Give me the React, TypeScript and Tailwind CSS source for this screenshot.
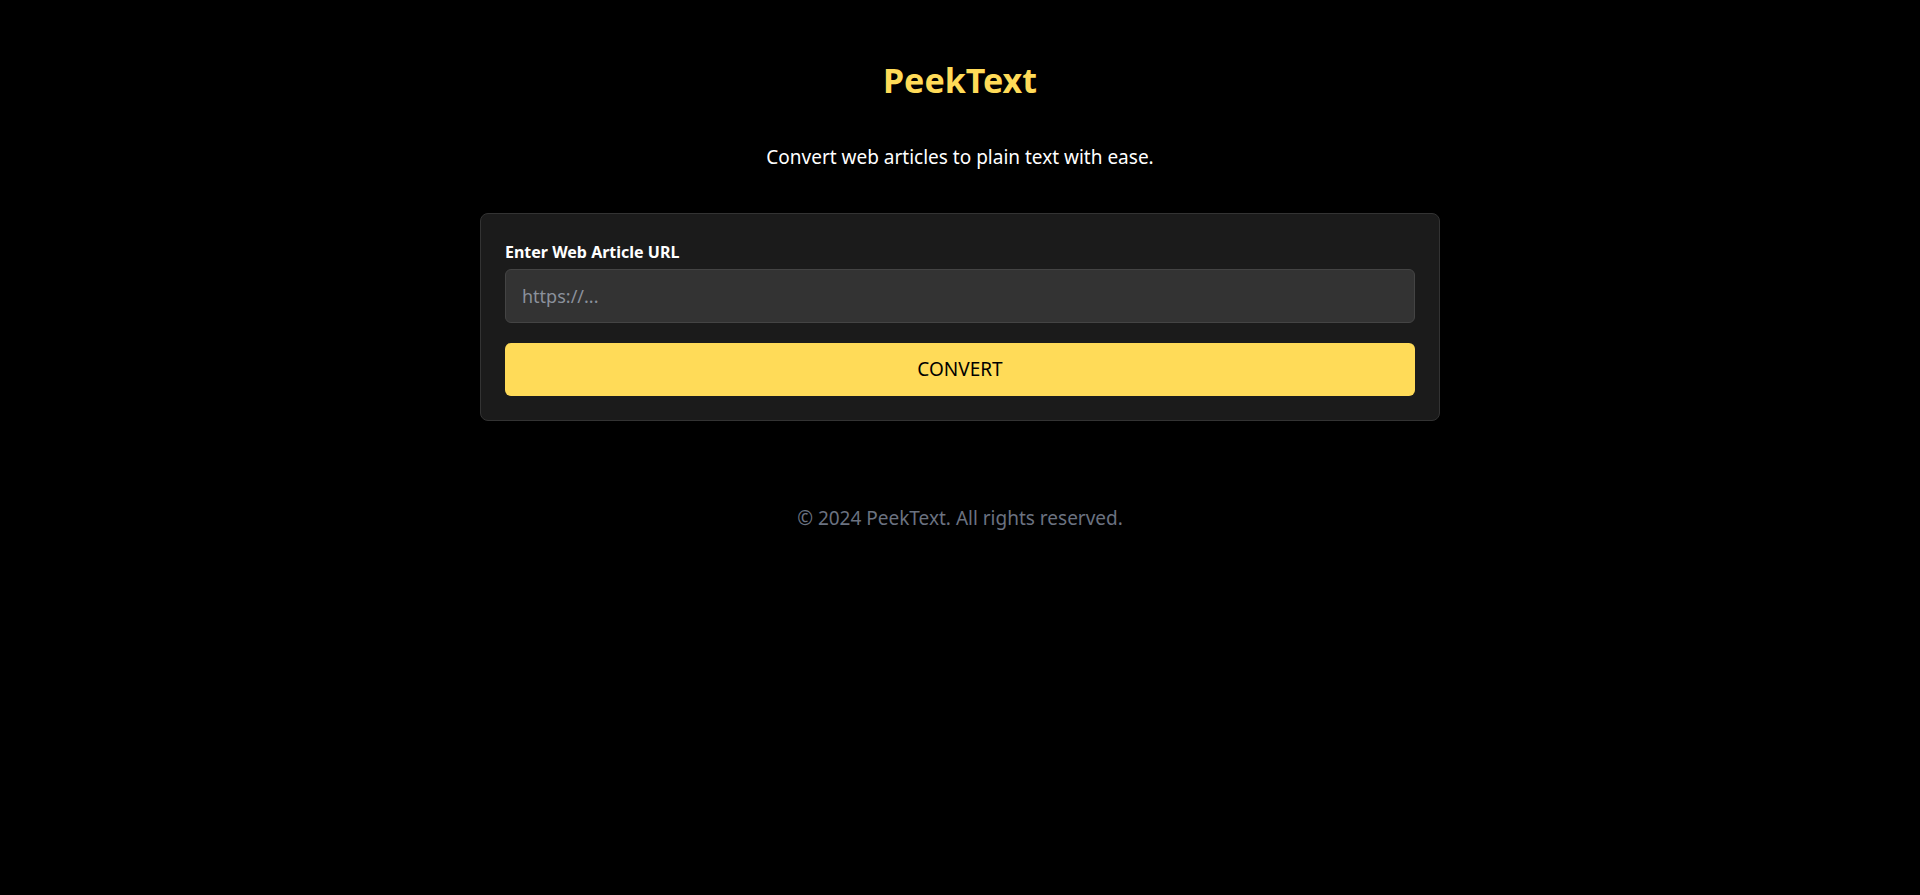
import { useState } from 'react';

export default function App() {
  const [url, setUrl] = useState('');

  return (
    <div className="min-h-screen bg-black flex flex-col items-center pt-[60px] font-['Noto_Sans',sans-serif]">
      {/* Header */}
      <h1 className="text-[34px] leading-10 font-bold text-[#ffdb58]">PeekText</h1>
      <p className="mt-[43px] text-[19px] leading-7 text-white">Convert web articles to plain text with ease.</p>

      {/* Converter card */}
      <div className="mt-[42px] w-[960px] bg-[#1b1b1b] border border-[#333333] rounded-lg p-6">
        <label className="block text-base leading-6 font-bold text-white mb-[7px] pt-[2px]">Enter Web Article URL</label>
        <input
          type="text"
          value={url}
          onChange={(e) => setUrl(e.target.value)}
          placeholder="https://..."
          className="w-full px-4 py-3 text-lg leading-7 bg-[#333333] border border-[#444444] rounded-md text-white placeholder:text-[#8b919c] outline-none -mt-[2px]"
        />
        <button className="mt-5 w-full h-[53px] text-[19px] bg-[#ffdb58] text-black rounded-md">CONVERT</button>
      </div>

      {/* Footer */}
      <footer className="mt-[83px] text-[19px] leading-7 text-[#6b7280]">© 2024 PeekText. All rights reserved.</footer>
    </div>
  );
}
